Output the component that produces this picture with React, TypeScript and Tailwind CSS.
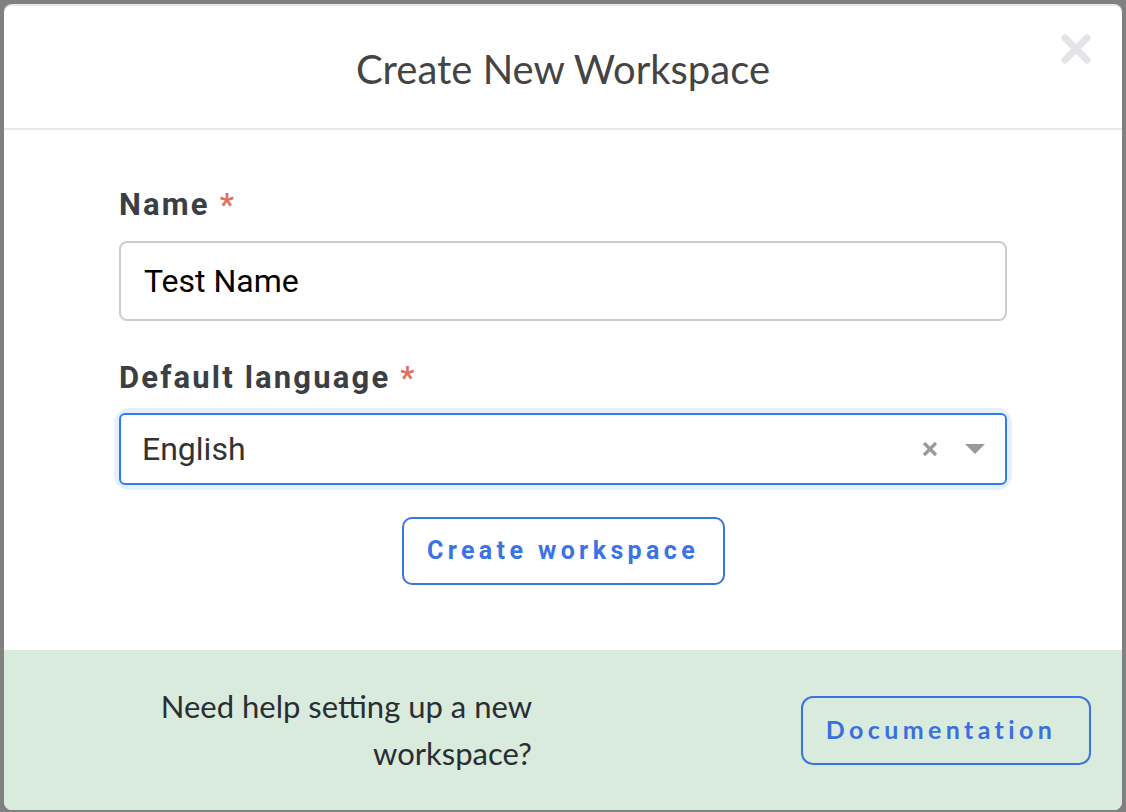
import React from "react";

const lato = { fontFamily: "Lato, 'Liberation Sans', sans-serif" };
const roboto = { fontFamily: "Roboto, 'Liberation Sans', sans-serif" };

function CloseIcon() {
  return (
    <svg width="30" height="30" viewBox="0 0 30 30" fill="none">
      <path
        d="M4 4 L26 26 M26 4 L4 26"
        stroke="#e3e3e8"
        strokeWidth="7"
        strokeLinecap="round"
      />
    </svg>
  );
}

function FieldLabel({ children }: { children: React.ReactNode }) {
  return (
    <div
      className="text-[31px] leading-[36px] font-bold tracking-[0.07em] text-[#3b3e43]"
      style={roboto}
    >
      {children} <span className="text-[#e06f5e]">*</span>
    </div>
  );
}

export default function App() {
  return (
    <div className="min-h-screen bg-[#808080] p-1">
      <div className="w-[1118px] h-[806px] flex flex-col bg-white rounded-lg overflow-hidden border-t-2 border-[#e6e6ec]">
        {/* Header */}
        <div className="relative h-[124px] shrink-0 flex items-center justify-center pt-1 border-b-2 border-[#e8e8ee]">
          <h2 className="text-[40px] leading-[48px] text-[#444]" style={lato}>
            Create New Workspace
          </h2>
          <button className="absolute right-[31px] top-[28px]">
            <CloseIcon />
          </button>
        </div>

        {/* Form */}
        <div className="flex-1 px-[115px] pt-[57px]">
          <FieldLabel>Name</FieldLabel>
          <div
            className="mt-[18px] h-[80px] rounded-lg border-2 border-[#cdcdcd] flex items-center px-[23px] text-[32px] text-black"
            style={roboto}
          >
            Test Name
          </div>

          <div className="mt-[39px]">
            <FieldLabel>Default language</FieldLabel>
          </div>
          <div className="mt-[17px] rounded-[10px] ring-[5px] ring-[#e6effc]">
            <div
              className="h-[72px] rounded-md border-2 border-[#2f7cf0] flex items-center pl-[21px] pr-[20px] text-[32px] text-[#333]"
              style={roboto}
            >
              <span className="flex-1">English</span>
              <svg width="18" height="18" viewBox="0 0 18 18" className="mr-[26px]">
                <path d="M3 3 L15 15 M15 3 L3 15" stroke="#999" strokeWidth="3.2" />
              </svg>
              <svg width="20" height="10" viewBox="0 0 20 10">
                <path d="M0 0 L20 0 L10 10 Z" fill="#999" />
              </svg>
            </div>
          </div>

          <div className="mt-[32px] flex justify-center">
            <button
              className="h-[68px] w-[323px] rounded-[10px] border-2 border-[#3a73e4] text-[25px] font-bold tracking-[0.175em] text-[#3a73e4]"
              style={roboto}
            >
              Create workspace
            </button>
          </div>
        </div>

        {/* Footer */}
        <div className="h-[160px] shrink-0 bg-[#d9ebdd] flex items-center pl-[115px] pr-[31px]">
          <p
            className="w-[413px] text-right text-[31px] leading-[47px] text-[#2a2e33]"
            style={lato}
          >
            Need help setting up a new workspace?
          </p>
          <button
            className="ml-auto h-[69px] w-[290px] pr-[10px] rounded-[12px] border-2 border-[#3a73e4] text-[25px] font-bold tracking-[0.175em] text-[#3a6fe0]"
            style={lato}
          >
            Documentation
          </button>
        </div>
      </div>
    </div>
  );
}
